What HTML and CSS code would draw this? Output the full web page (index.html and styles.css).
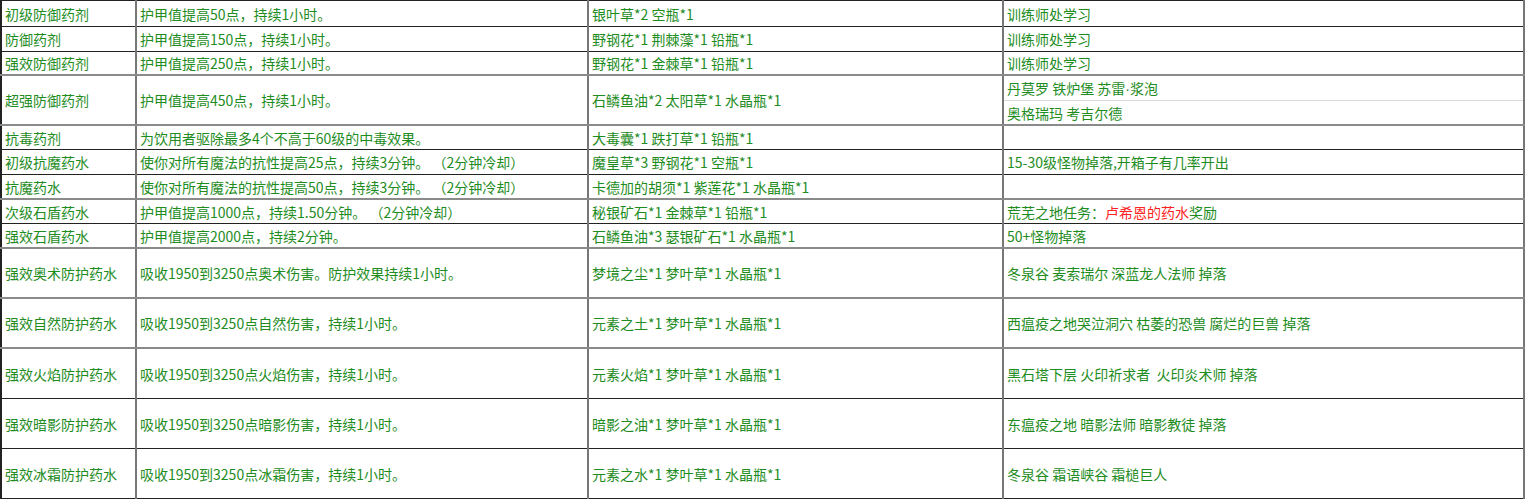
FILE: index.html
```html
<!DOCTYPE html>
<html lang="zh-CN">
<head>
<meta charset="utf-8">
<title>药剂表</title>
<link rel="stylesheet" href="styles.css">
</head>
<body>
<table class="potions">
  <colgroup>
    <col class="c-name">
    <col class="c-effect">
    <col class="c-mats">
    <col class="c-src">
  </colgroup>
  <tbody>
    <tr class="line-dark h25"><td>初级防御药剂</td><td>护甲值提高50点，持续1小时。</td><td>银叶草*2 空瓶*1</td><td>训练师处学习</td></tr>
    <tr class="line-dark h24"><td>防御药剂</td><td>护甲值提高150点，持续1小时。</td><td>野钢花*1 荆棘藻*1 铅瓶*1</td><td>训练师处学习</td></tr>
    <tr class="line-gray h22"><td>强效防御药剂</td><td>护甲值提高250点，持续1小时。</td><td>野钢花*1 金棘草*1 铅瓶*1</td><td>训练师处学习</td></tr>
    <tr class="sub-top h24"><td rowspan="2">超强防御药剂</td><td rowspan="2">护甲值提高450点，持续1小时。</td><td rowspan="2">石鳞鱼油*2 太阳草*1 水晶瓶*1</td><td>丹莫罗 铁炉堡 苏雷<span class="dot">·</span>浆泡</td></tr>
    <tr class="line-gray h23"><td>奥格瑞玛 考吉尔德</td></tr>
    <tr class="line-dark h23"><td>抗毒药剂</td><td>为饮用者驱除最多4个不高于60级的中毒效果。</td><td>大毒囊*1 跌打草*1 铅瓶*1</td><td></td></tr>
    <tr class="line-dark h24"><td>初级抗魔药水</td><td>使你对所有魔法的抗性提高25点，持续3分钟。 （2分钟冷却）</td><td>魔皇草*3 野钢花*1 空瓶*1</td><td>15-30级怪物掉落,开箱子有几率开出</td></tr>
    <tr class="line-gray h23"><td>抗魔药水</td><td>使你对所有魔法的抗性提高50点，持续3分钟。 （2分钟冷却）</td><td>卡德加的胡须*1 紫莲花*1 水晶瓶*1</td><td></td></tr>
    <tr class="line-dark h23"><td>次级石盾药水</td><td>护甲值提高1000点，持续1.50分钟。 （2分钟冷却）</td><td>秘银矿石*1 金棘草*1 铅瓶*1</td><td>荒芜之地任务：<span class="red">卢希恩的药水</span>奖励</td></tr>
    <tr class="line-gray h23"><td>强效石盾药水</td><td>护甲值提高2000点，持续2分钟。</td><td>石鳞鱼油*3 瑟银矿石*1 水晶瓶*1</td><td>50+怪物掉落</td></tr>
    <tr class="line-gray h48"><td>强效奥术防护药水</td><td>吸收1950到3250点奥术伤害。防护效果持续1小时。</td><td>梦境之尘*1 梦叶草*1 水晶瓶*1</td><td>冬泉谷 麦索瑞尔 深蓝龙人法师 掉落</td></tr>
    <tr class="line-gray h48"><td>强效自然防护药水</td><td>吸收1950到3250点自然伤害，持续1小时。</td><td>元素之土*1 梦叶草*1 水晶瓶*1</td><td>西瘟疫之地哭泣洞穴 枯萎的恐兽 腐烂的巨兽 掉落</td></tr>
    <tr class="line-dark h49"><td>强效火焰防护药水</td><td>吸收1950到3250点火焰伤害，持续1小时。</td><td>元素火焰*1 梦叶草*1 水晶瓶*1</td><td>黑石塔下层 火印祈求者&nbsp; 火印炎术师 掉落</td></tr>
    <tr class="line-dark h49"><td>强效暗影防护药水</td><td>吸收1950到3250点暗影伤害，持续1小时。</td><td>暗影之油*1 梦叶草*1 水晶瓶*1</td><td>东瘟疫之地 暗影法师 暗影教徒 掉落</td></tr>
    <tr class="line-dark h49"><td>强效冰霜防护药水</td><td>吸收1950到3250点冰霜伤害，持续1小时。</td><td>元素之水*1 梦叶草*1 水晶瓶*1</td><td>冬泉谷 霜语峡谷 霜槌巨人</td></tr>
  </tbody>
</table>
</body>
</html>
```

FILE: styles.css
```css
html, body {
  margin: 0;
  padding: 0;
  background: #ffffff;
}

.potions {
  border-collapse: collapse;
  table-layout: fixed;
  width: 1525px;
  font-family: "Noto Sans CJK SC", "Noto Sans", sans-serif;
  font-size: 14px;
  color: #1e8c1e;
  text-spacing-trim: space-all;
  border-top: 1px solid #222;
  border-left: 2px solid #222;
  border-right: 2px solid #111;
}

.c-name { width: 135px; }
.c-effect { width: 452px; }
.c-mats { width: 415px; }
.c-src { width: 521px; }

.potions td {
  padding: 0 0 0 3px;
  vertical-align: middle;
  white-space: pre;
  overflow: hidden;
  line-height: 18px;
  border-left: 2px solid #777;
  border-right: 2px solid #777;
}

.potions td:first-child { border-left: 2px solid #222; }

.h22 td { height: 22px; }
.h23 td { height: 23px; }
.h24 td { height: 24px; }
.h25 td { height: 25px; }
.h48 td { height: 48px; }
.h49 td { height: 49px; }

.line-dark td { border-bottom: 1px solid #222; }
.line-gray td { border-bottom: 2px solid #8a8a8a; }
.sub-top td { border-bottom: 1px solid #dcdcdc; }
.sub-top td[rowspan] { border-bottom: 2px solid #8a8a8a; }

.dot { font-family: "Liberation Sans", sans-serif; }
.red { color: #ff2222; }
```
